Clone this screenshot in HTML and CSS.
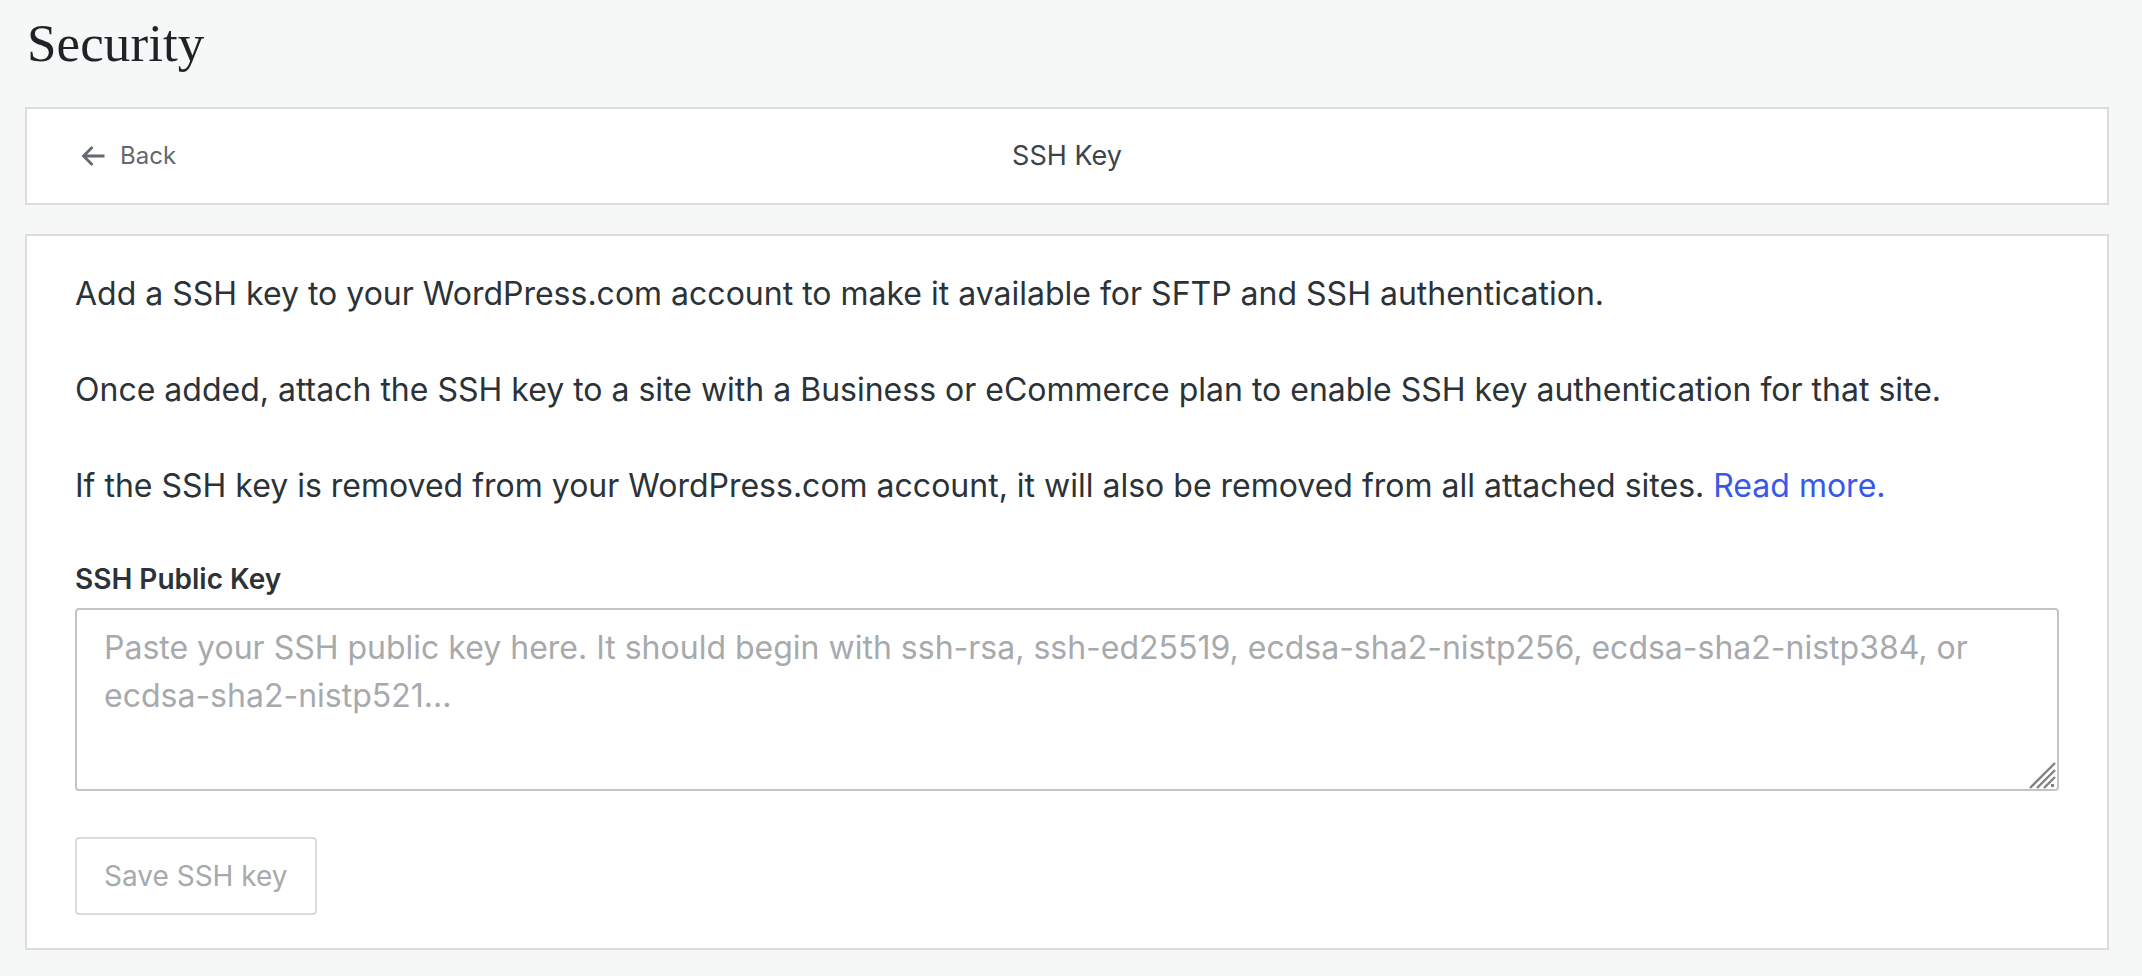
FILE: index.html
```html
<!DOCTYPE html>
<html lang="en">
<head>
<meta charset="utf-8">
<title>Security – SSH Key</title>
<link rel="stylesheet" href="styles.css">
</head>
<body>
<main class="page">
  <h1 class="title">Security</h1>

  <header class="header-card">
    <a class="back" href="#">
      <svg class="back-icon" width="26" height="26" viewBox="0 0 26 26" aria-hidden="true">
        <path d="M24.5 13H3.5M12.5 4L3.5 13l9 9" fill="none" stroke="currentColor" stroke-width="2.8" stroke-linecap="butt" stroke-linejoin="miter"/>
      </svg>
      <span>Back</span>
    </a>
    <div class="header-title">SSH Key</div>
    <div class="header-spacer"></div>
  </header>

  <section class="card">
    <p class="para">Add a SSH key to your WordPress.com account to make it available for SFTP and SSH authentication.</p>
    <p class="para">Once added, attach the SSH key to a site with a Business or eCommerce plan to enable SSH key authentication for that site.</p>
    <p class="para">If the SSH key is removed from your WordPress.com account, it will also be removed from all attached sites. <a class="link" href="#">Read more.</a></p>

    <label class="label" for="key">SSH Public Key</label>
    <div class="input-wrap">
      <textarea id="key" class="key-input" placeholder="Paste your SSH public key here. It should begin with ssh-rsa, ssh-ed25519, ecdsa-sha2-nistp256, ecdsa-sha2-nistp384, or ecdsa-sha2-nistp521..."></textarea>
      <svg class="resize-grip" width="28" height="28" viewBox="0 0 28 28" aria-hidden="true">
        <path d="M2 27L27 2M9 27L27 9M16 27L27 16" fill="none" stroke="#808285" stroke-width="2.4"/>
        <rect x="23" y="23" width="3" height="3" fill="#808285"/>
      </svg>
    </div>

    <button class="save" type="button" disabled>Save SSH key</button>
  </section>
</main>
</body>
</html>
```

FILE: styles.css
```css
html, body {
  margin: 0;
  padding: 0;
}

body {
  background: #f6f7f7;
  font-family: Inter, "Noto Sans", "Liberation Sans", sans-serif;
  color: #2c3338;
  -webkit-font-smoothing: antialiased;
}

.page {
  padding: 13px 33px 26px 25px;
}

.title {
  margin: 0 0 34px 0;
  padding-left: 2px;
  font-family: "Liberation Serif", "DejaVu Serif", serif;
  font-weight: 400;
  font-size: 53px;
  line-height: 60px;
  color: #1d2327;
  letter-spacing: 0.1px;
}

.header-card {
  display: grid;
  grid-template-columns: 1fr auto 1fr;
  align-items: center;
  height: 94px;
  background: #fff;
  border: 2px solid #dcdcde;
  padding: 0 54px;
}

.back {
  display: inline-flex;
  align-items: center;
  gap: 14px;
  color: #646970;
  text-decoration: none;
  font-size: 24px;
  line-height: 36px;
  justify-self: start;
  margin-left: -1px;
}

.back-icon {
  display: block;
  flex: none;
}

.header-title {
  font-size: 27px;
  line-height: 36px;
  color: #3c434a;
}

.card {
  margin-top: 29px;
  background: #fff;
  border: 2px solid #dcdcde;
  padding: 34px 48px 33px 48px;
  display: flex;
  flex-direction: column;
  align-items: flex-start;
}

.para {
  margin: 0 0 48px 0;
  font-size: 32px;
  line-height: 48px;
  color: #2c3338;
}

.link {
  color: #3858e9;
  text-decoration: none;
}

.label {
  display: block;
  font-size: 28px;
  line-height: 42px;
  font-weight: 600;
  color: #2c3338;
  margin-bottom: 8px;
}

.input-wrap {
  position: relative;
  width: 100%;
}

.key-input {
  display: block;
  box-sizing: border-box;
  width: 100%;
  height: 183px;
  margin: 0;
  padding: 14px 27px;
  border: 2px solid #c3c4c7;
  border-radius: 4px;
  font-family: inherit;
  font-size: 32px;
  line-height: 48px;
  color: #2c3338;
  background: #fff;
  resize: none;
  outline: none;
}

.key-input::placeholder {
  color: #a7aaad;
  opacity: 1;
}

.resize-grip {
  position: absolute;
  right: 3px;
  bottom: 2px;
  pointer-events: none;
}

.save {
  margin-top: 46px;
  box-sizing: border-box;
  height: 78px;
  padding: 0 27px;
  background: #fff;
  border: 2px solid #dcdcde;
  border-radius: 4px;
  font-family: inherit;
  font-size: 28px;
  line-height: 42px;
  color: #a7aaad;
  cursor: default;
}
```
